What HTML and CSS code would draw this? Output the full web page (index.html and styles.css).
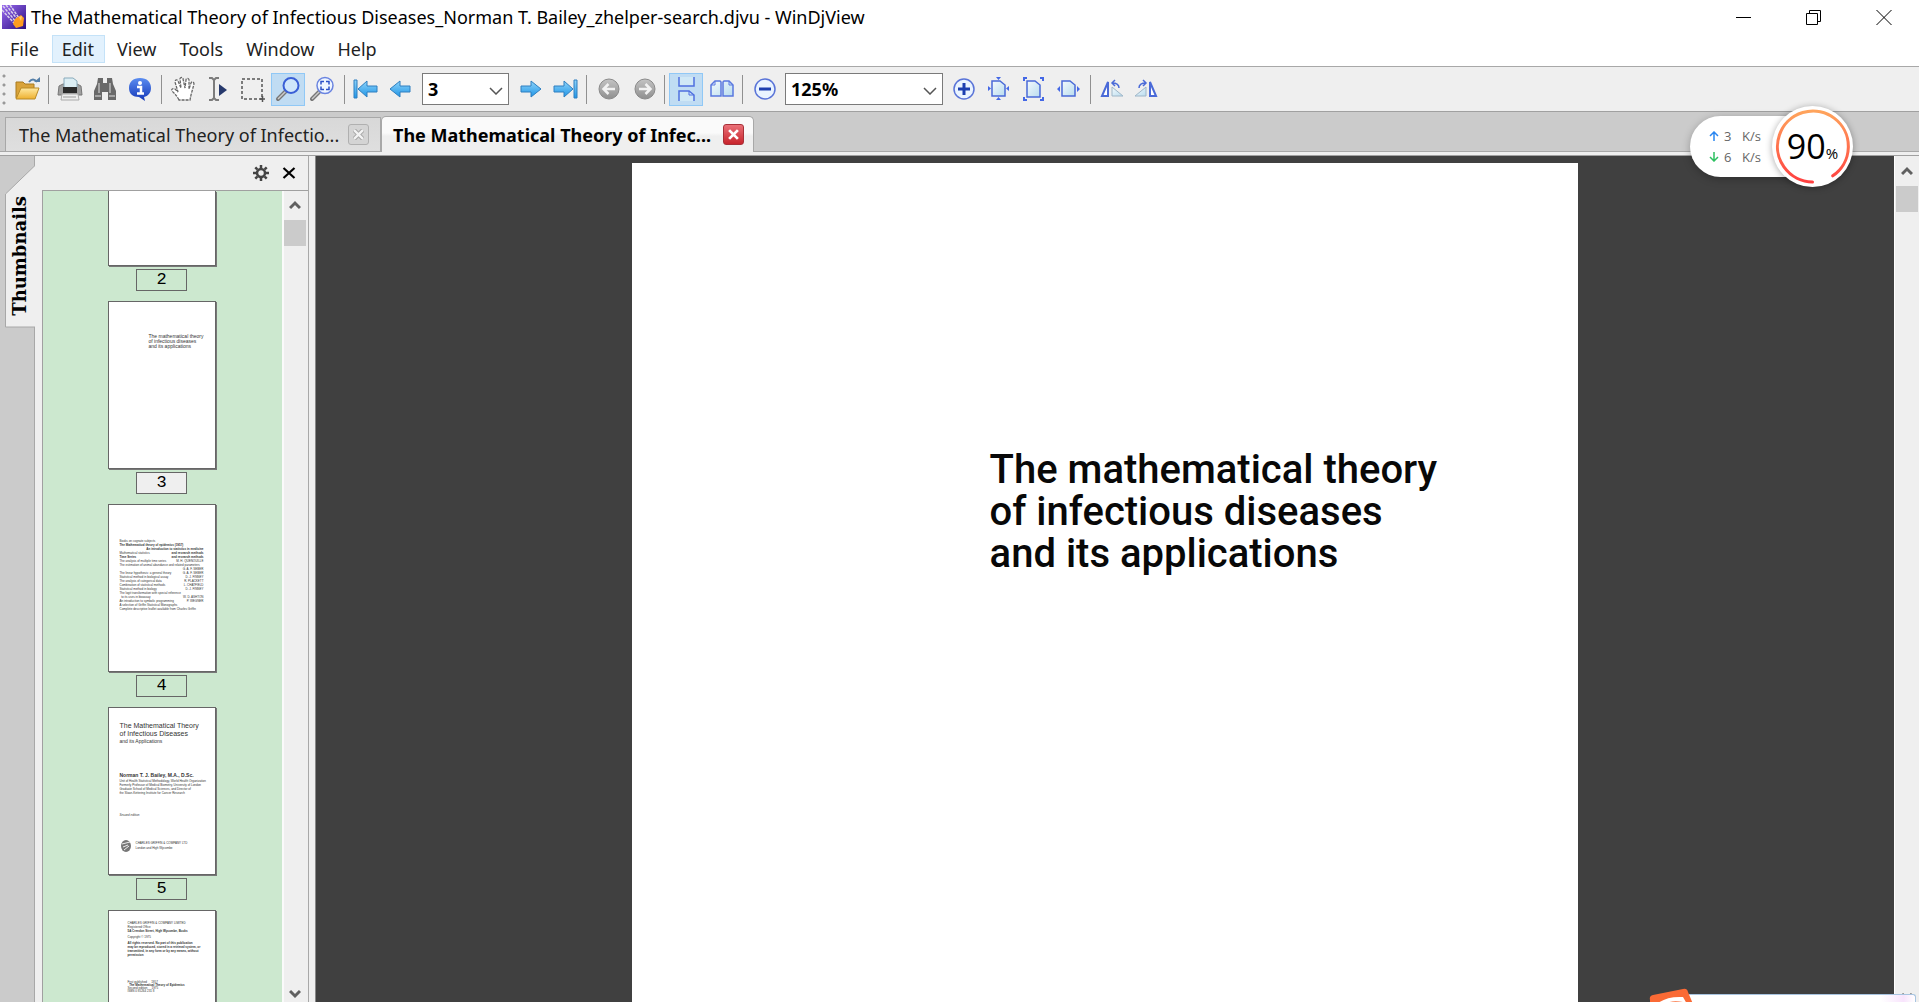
FILE: index.html
```html
<!DOCTYPE html>
<html lang="en">
<head>
<meta charset="utf-8">
<title>The Mathematical Theory of Infectious Diseases - WinDjView</title>
<link rel="stylesheet" href="styles.css">
</head>
<body>
<svg class="defs" width="0" height="0" aria-hidden="true">
  <defs>
    <linearGradient id="blue" x1="0" y1="0" x2="0" y2="1"><stop offset="0" stop-color="#8fd4fa"/><stop offset="1" stop-color="#1f95e6"/></linearGradient>
    <linearGradient id="gray" x1="0" y1="0" x2="0" y2="1"><stop offset="0" stop-color="#c4c4c4"/><stop offset="1" stop-color="#8f8f8f"/></linearGradient>
    <linearGradient id="paper" x1="0" y1="0" x2="1" y2="1"><stop offset="0" stop-color="#f4fafd"/><stop offset="1" stop-color="#b9dcee"/></linearGradient>
    <linearGradient id="folder" x1="0" y1="0" x2="0" y2="1"><stop offset="0" stop-color="#ffe9a0"/><stop offset="1" stop-color="#eeb02f"/></linearGradient>
    <linearGradient id="info" x1="0" y1="0" x2="0" y2="1"><stop offset="0" stop-color="#5a8cf0"/><stop offset="1" stop-color="#1437b8"/></linearGradient>
    <linearGradient id="ring" x1="0" y1="0" x2="0" y2="1"><stop offset="0" stop-color="#ffa45c"/><stop offset="1" stop-color="#ff4040"/></linearGradient>
    <linearGradient id="app" x1="0" y1="0" x2="1" y2="1"><stop offset="0" stop-color="#9a6af0"/><stop offset="1" stop-color="#2a0f80"/></linearGradient>
  </defs>
</svg>

<header class="titlebar">
  <svg class="app-icon" viewBox="0 0 24 24"><rect width="24" height="24" fill="url(#app)"/><path d="M1 1l13 16M4 0l12 15M8 0l9 13M0 5l12 13" stroke="#d8d0ea" stroke-width="1.500" stroke-dasharray="3 1"/><path d="M13 14l6-4 3 3-1 8-7 2-3-4z" fill="#ff9d20"/><path d="M17 12l3-1-1 5z" fill="#ffd070"/></svg>
  <h1 class="title">The Mathematical Theory of Infectious Diseases_Norman T. Bailey_zhelper-search.djvu - WinDjView</h1>
  <div class="window-controls">
    <button aria-label="Minimize"><svg viewBox="0 0 16 16"><path d="M0 8.500h15" stroke="#000"/></svg></button>
    <button aria-label="Restore"><svg viewBox="0 0 16 16"><path d="M.5 4.500h11v11H.5zM3.500 4.500v-3h11v11h-3" fill="none" stroke="#000"/></svg></button>
    <button aria-label="Close"><svg viewBox="0 0 16 16"><path d="M.5 1l15 15M15.500 1l-15 15" stroke="#000"/></svg></button>
  </div>
</header>

<nav class="menubar">
  <button>File</button><button class="hot">Edit</button><button>View</button><button>Tools</button><button>Window</button><button>Help</button>
</nav>

<div class="toolbar" role="toolbar">
  <span class="grip"></span>
  <div class="group">
    <button aria-label="Open"><svg viewBox="0 0 26 26"><path d="M2 22V6h7l2 2h9v4" fill="#d9a33a" stroke="#a87a20"/><path d="M2 23l5-11h18l-4 11z" fill="url(#folder)" stroke="#b98a26"/><path d="M15 6q4-5 8 0" fill="none" stroke="#557fa8" stroke-width="2"/><path d="M20 6h6V1z" fill="#557fa8"/></svg></button>
  </div>
  <span class="sep"></span>
  <div class="group">
    <button aria-label="Print"><svg viewBox="0 0 26 26"><path d="M2 10l4-2h14l4 2 1 9H1z" fill="#a0a0a0" stroke="#777"/><path d="M7 12V2h9l4 3v7z" fill="#dceef4" stroke="#8ab"/><path d="M6 11h14v6H6z" fill="#2c2c2c"/><path d="M5 18h16l1 6H4z" fill="#eee" stroke="#aaa"/><path d="M6 21h13" stroke="#9a9a9a"/></svg></button>
    <button aria-label="Find"><svg viewBox="0 0 26 26"><path d="M6 2h5v5h4V2h5l1 6 3 7v9h-8v-8h-6v8H2v-9l3-7z" fill="#696969"/><path d="M7 7v10M18 7v10M3 20h6M17 20h6" stroke="#a5a5a5" stroke-width="2"/></svg></button>
    <button aria-label="Information"><svg viewBox="0 0 26 26"><path d="M13 2c7 0 11 4 11 10 0 5-3 8-7 9l1 4-6-4C6 21 2 18 2 12 2 6 6 2 13 2z" fill="url(#info)"/><circle cx="13" cy="7" r="2" fill="#fff"/><path d="M10 11h4v6M10 17.500h7" fill="none" stroke="#fff" stroke-width="2.500"/></svg></button>
  </div>
  <span class="sep"></span>
  <div class="group">
    <button aria-label="Hand"><svg viewBox="0 0 26 26"><path d="M9 24c-2-4-4-6-7-9-1-2 1-3 3-2l3 3L5 6c0-2 2-3 3-1l3 7-1-9c0-2 3-2 3 0l2 9 1-8c0-2 3-2 3 0v9l2-6c1-2 3-1 3 1l-3 11-1 5z" fill="#fff" stroke="#666" stroke-width="1.300" stroke-dasharray="3 1"/></svg></button>
    <button aria-label="Select text"><svg viewBox="0 0 26 26"><path d="M4 2h3l2 2 2-2h3M9 4v18M4 24h3l2-2 2 2h3" fill="none" stroke="#7c7c7c" stroke-width="2"/><path d="M14 8l8 6-8 6z" fill="#26386c"/></svg></button>
    <button aria-label="Select rectangle"><svg viewBox="0 0 26 26"><path d="M2 3h20v20H2z" fill="none" stroke="#555" stroke-width="1.500" stroke-dasharray="3 2"/><path d="M20 23h5M22.500 20v6" stroke="#555" stroke-width="1.500"/></svg></button>
    <button class="on" aria-label="Zoom"><svg viewBox="0 0 26 26"><path d="M3 23l8-8" stroke="#777" stroke-width="4" stroke-linecap="round"/><path d="M3 23l8-8" stroke="#ccc" stroke-width="1.500"/><circle cx="16" cy="9.500" r="7.500" fill="#cfe6fb" stroke="#3a5fd6" stroke-width="2"/></svg></button>
    <button aria-label="Zoom to selection"><svg viewBox="0 0 26 26"><path d="M2 23l8-8" stroke="#777" stroke-width="4" stroke-linecap="round"/><path d="M2 23l8-8" stroke="#ccc" stroke-width="1.500"/><circle cx="15" cy="9.500" r="8" fill="#eef5ff" stroke="#6a84e0" stroke-width="1.500"/><path d="M11 8.500V5.500h3M16 5.500h3v3M19 10.500v3h-3M14 13.500h-3v-3" fill="none" stroke="#2b50c8" stroke-width="1.500"/></svg></button>
  </div>
  <span class="sep"></span>
  <div class="group">
    <button aria-label="First page"><svg viewBox="0 0 26 26"><path d="M1 4h3v18H1z" fill="url(#blue)" stroke="#2e7fc0"/><path d="M5 13l9-8v5h10v6H14v5z" fill="url(#blue)" stroke="#2e7fc0"/></svg></button>
    <button aria-label="Previous page"><svg viewBox="0 0 26 26"><path d="M2 13l10-8v5h10v6H12v5z" fill="url(#blue)" stroke="#2e7fc0"/></svg></button>
  </div>
  <div class="combo page-combo"><select aria-label="Page"><option>3</option></select><svg viewBox="0 0 14 8"><path d="M1 1l6 6 6-6" fill="none" stroke="#555" stroke-width="1.500"/></svg></div>
  <div class="group">
    <button aria-label="Next page"><svg viewBox="0 0 26 26"><path d="M24 13L14 5v5H4v6h10v5z" fill="url(#blue)" stroke="#2e7fc0"/></svg></button>
    <button aria-label="Last page"><svg viewBox="0 0 26 26"><path d="M22 4h3v18h-3z" fill="url(#blue)" stroke="#2e7fc0"/><path d="M21 13l-9-8v5H2v6h10v5z" fill="url(#blue)" stroke="#2e7fc0"/></svg></button>
  </div>
  <span class="sep"></span>
  <div class="group">
    <button aria-label="Back"><svg viewBox="0 0 26 26"><circle cx="14" cy="13" r="10" fill="url(#gray)" stroke="#8a8a8a"/><path d="M20 13H9M13.500 8l-5 5 5 5" fill="none" stroke="#f2f2f2" stroke-width="2.500"/></svg></button>
    <button aria-label="Forward"><svg viewBox="0 0 26 26"><circle cx="15" cy="13" r="10" fill="url(#gray)" stroke="#8a8a8a"/><path d="M9 13h11M15.500 8l5 5-5 5" fill="none" stroke="#f2f2f2" stroke-width="2.500"/></svg></button>
  </div>
  <span class="sep"></span>
  <div class="group">
    <button class="on" aria-label="Continuous"><svg viewBox="0 0 26 26"><path d="M6 1v9h15V1M6 25V15h10l5 4v6" fill="#d0e8f6"/><path d="M6 1v9h15V1M6 25V15h10l5 4v6" fill="none" stroke="#4f6fe0" stroke-width="1.500"/><path d="M16 15v4h5" fill="none" stroke="#4f6fe0"/></svg></button>
    <button aria-label="Facing pages"><svg viewBox="0 0 26 26"><path d="M3 20V9l4-4h5l1 1v14zM25 20V9l-4-4h-5l-1 1v14z" fill="url(#paper)" stroke="#5a78e0" stroke-width="1.500"/><path d="M7 5v4H3M21 5v4h4" fill="none" stroke="#5a78e0"/></svg></button>
  </div>
  <span class="sep"></span>
  <div class="group">
    <button aria-label="Zoom out"><svg viewBox="0 0 26 26"><circle cx="14" cy="13" r="10" fill="#eaf4ff" stroke="#5a74d8" stroke-width="1.500"/><path d="M8 13h12" stroke="#1c3fb0" stroke-width="3"/></svg></button>
  </div>
  <div class="combo zoom-combo"><select aria-label="Zoom level"><option>125%</option></select><svg viewBox="0 0 14 8"><path d="M1 1l6 6 6-6" fill="none" stroke="#555" stroke-width="1.500"/></svg></div>
  <div class="group">
    <button aria-label="Zoom in"><svg viewBox="0 0 26 26"><circle cx="13" cy="13" r="10" fill="#eaf4ff" stroke="#5a74d8" stroke-width="1.500"/><path d="M7 13h12M13 7v12" stroke="#1c3fb0" stroke-width="3"/></svg></button>
    <button aria-label="Fit page"><svg viewBox="0 0 26 26"><path d="M6 5h8l5 4v11H6z" fill="url(#paper)" stroke="#4a6ad8" stroke-width="1.500"/><path d="M10 1h5l-2.500 3zM10 24h5l-2.500-3zM2 10v5l3-2.500zM23 10v5l-3-2.500z" fill="#4468e6"/></svg></button>
    <button aria-label="Actual size"><svg viewBox="0 0 26 26"><path d="M6 5h8l5 4v12H6z" fill="url(#paper)" stroke="#4a6ad8" stroke-width="1.500"/><path d="M3 5V2h3M19 2h3v3M3 21v3h3M22 21v3h-3" fill="none" stroke="#4468e6" stroke-width="2"/></svg></button>
    <button aria-label="Fit width"><svg viewBox="0 0 26 26"><path d="M6 5h8l5 4v11H6z" fill="url(#paper)" stroke="#4a6ad8" stroke-width="1.500"/><path d="M4 10v6l-3-3zM21 10v6l3-3z" fill="#4468e6"/></svg></button>
  </div>
  <span class="sep"></span>
  <div class="group">
    <button aria-label="Rotate left"><svg viewBox="0 0 26 26"><path d="M3 20l6-14v14z" fill="#fff" stroke="#4a6ad8" stroke-width="2"/><path d="M13 20V11l11 9z" fill="url(#paper)" stroke="#9eb6c8"/><path d="M20 12c0-3-2-5-7-5M16 4l-3 3 3 3" fill="none" stroke="#4a6ad8" stroke-width="1.500"/></svg></button>
    <button aria-label="Rotate right"><svg viewBox="0 0 26 26"><path d="M22 20L16 6v14z" fill="#fff" stroke="#4a6ad8" stroke-width="2"/><path d="M12 20V11L1 20z" fill="url(#paper)" stroke="#9eb6c8"/><path d="M5 12c0-3 2-5 7-5M9 4l3 3-3 3" fill="none" stroke="#4a6ad8" stroke-width="1.500"/></svg></button>
  </div>
</div>

<div class="tabs">
  <div class="tab"><span class="tab-name">The Mathematical Theory of Infectio...</span><button aria-label="Close tab"><svg viewBox="0 0 10 10"><path d="M1 1l8 8M9 1L1 9" stroke="#a8a8a8" stroke-width="4"/><path d="M1 1l8 8M9 1L1 9" stroke="#f4f4f4" stroke-width="2"/></svg></button></div>
  <div class="tab active"><span class="tab-name">The Mathematical Theory of Infec...</span><button aria-label="Close tab"><svg viewBox="0 0 10 10"><path d="M1 1l8 8M9 1L1 9" stroke="#fff" stroke-width="2.500"/></svg></button></div>
</div>

<main class="work">
  <div class="side-strip">
    <button class="side-tab"><svg viewBox="0 0 30 163"><path d="M30 .5L.5 29v133H30" fill="#efefef" stroke="#a8a8a8"/></svg><span>Thumbnails</span></button>
  </div>
  <aside class="panel">
    <div class="panel-head">
      <button aria-label="Settings"><svg viewBox="0 0 16 16"><circle cx="8" cy="8" r="4" fill="none" stroke="#444" stroke-width="2.500"/><path d="M8 0v3M8 13v3M0 8h3M13 8h3M2.300 2.300l2 2M11.700 11.700l2 2M13.700 2.300l-2 2M2.300 13.700l2-2" stroke="#444" stroke-width="2.500"/></svg></button>
      <button aria-label="Close panel"><svg viewBox="0 0 16 16"><path d="M2.500 3l11 10M13.500 3l-11 10" stroke="#000" stroke-width="2.200"/></svg></button>
    </div>
    <div class="panel-body">
      <div class="thumbs">
        <figure><div class="thumb cut"></div><figcaption>2</figcaption></figure>
        <figure><div class="thumb half">The mathematical theory<br>of infectious diseases<br>and its applications</div><figcaption class="current">3</figcaption></figure>
        <figure><div class="thumb list">
          <p>Books on cognate subjects</p>
          <p><b>The Mathematical theory of epidemics (1957)</b></p>
          <p class="row"><span></span><b>An introduction to statistics in medicine</b></p>
          <p class="row"><span>Mathematical statistics</span><b>and research methods</b></p>
          <p class="row"><b>Time Series</b><b>and research methods</b></p>
          <p class="row"><span>The analysis of multiple time series</span><span>M. H. QUENOUILLE</span></p>
          <p>The estimation of animal abundance and related parameters</p>
          <p class="row"><span></span><span>G. A. F. SEBER</span></p>
          <p class="row"><span>The linear hypothesis: a general theory</span><span>G. A. F. SEBER</span></p>
          <p class="row"><span>Statistical method in biological assay</span><span>D. J. FINNEY</span></p>
          <p class="row"><span>The analysis of categorical data</span><span>R. PLACKETT</span></p>
          <p class="row"><span>Combination of statistical methods</span><span>L. CHATFIELD</span></p>
          <p class="row"><span>Statistical method in biology</span><span>D. J. FINNEY</span></p>
          <p>The logit transformation with special reference</p>
          <p class="row"><span>&nbsp; to its uses in bioassay</span><span>W. D. ASHTON</span></p>
          <p class="row"><span>An introduction to symbolic programming</span><span>P. WEGNER</span></p>
          <p>A selection of Griffin Statistical Monographs</p>
          <p>Complete descriptive leaflet available from Charles Griffin</p>
        </div><figcaption>4</figcaption></figure>
        <figure><div class="thumb cover">
          <p class="big">The Mathematical Theory<br>of Infectious Diseases</p><p class="mid">and its Applications</p>
          <p class="mid author"><b>Norman T. J. Bailey, M.A., D.Sc.</b></p>
          <p>Unit of Health Statistical Methodology, World Health Organization<br>Formerly Professor of Medical Biometry, University of London<br>Graduate School of Medical Sciences, and Director of<br>the Sloan-Kettering Institute for Cancer Research</p>
          <p class="edition">Second edition</p>
          <div class="press"><svg viewBox="0 0 12 14"><ellipse cx="6" cy="7" rx="5" ry="6" fill="#777"/><path d="M2 5l8-2M3 8l5-2M4 11l5-4" stroke="#eee"/></svg><p>CHARLES GRIFFIN &amp; COMPANY LTD<br>London and High Wycombe</p></div>
        </div><figcaption>5</figcaption></figure>
        <figure><div class="thumb imprint">
          <p>CHARLES GRIFFIN &amp; COMPANY LIMITED<br>Registered Office<br><b>5A Crendon Street, High Wycombe, Bucks</b></p>
          <p class="space">Copyright © 1975</p>
          <p class="space"><b>All rights reserved. No part of this publication<br>may be reproduced, stored in a retrieval system, or<br>transmitted, in any form or by any means, without<br>permission</b></p>
          <p class="later">First published &nbsp; &nbsp; 1957<br><b>&nbsp; The Mathematical Theory of Epidemics</b><br>Second edition &nbsp; &nbsp; 1975<br>ISBN 0 85264 231 8</p>
        </div></figure>
      </div>
      <div class="scroll">
        <svg viewBox="0 0 12 10"><path d="M1 8l5-5 5 5" fill="none" stroke="#606060" stroke-width="3"/></svg>
        <span class="knob"></span>
        <svg class="down" viewBox="0 0 12 10"><path d="M1 2l5 5 5-5" fill="none" stroke="#606060" stroke-width="3"/></svg>
      </div>
    </div>
  </aside>
  <section class="viewer">
    <article class="page"><h2>The mathematical theory<br>of infectious diseases<br>and its applications</h2></article>
  </section>
  <div class="scroll outer">
    <svg viewBox="0 0 12 10"><path d="M1 8l5-5 5 5" fill="none" stroke="#606060" stroke-width="3"/></svg>
    <span class="knob"></span>
    <svg class="down" viewBox="0 0 12 10"><path d="M1 2l5 5 5-5" fill="none" stroke="#606060" stroke-width="3"/></svg>
  </div>
</main>

<div class="meter">
  <div class="rates">
    <svg viewBox="0 0 10 10"><path d="M5 10V1M1 5l4-4 4 4" fill="none" stroke="#2a86f0" stroke-width="1.500"/></svg><span>3</span><span>K/s</span>
    <svg viewBox="0 0 10 10"><path d="M5 0v9M1 5l4 4 4-4" fill="none" stroke="#2cc060" stroke-width="1.500"/></svg><span>6</span><span>K/s</span>
  </div>
  <div class="dial">
    <svg viewBox="0 0 80 80"><path d="M60 69A35 35 0 1 0 40 75" fill="none" stroke="url(#ring)" stroke-width="3" stroke-linecap="round"/></svg>
    <span class="value">90</span><span class="unit">%</span>
  </div>
</div>
<div class="ime"><svg viewBox="0 0 46 16"><path d="M1 12q-1-4 3-5L34 1q4-1 5 3l5 12H1z" fill="#fa6a35"/><path d="M8 16q9-8 26-7l4 7-4-2q-12-2-18 2z" fill="#fff"/></svg></div>
</body>
</html>
```
FILE: styles.css
```css
* { box-sizing: border-box; }
html, body { height: 100%; }
body {
  margin: 0;
  display: flex;
  flex-direction: column;
  overflow: hidden;
  position: relative;
  background: #efefef;
  color: #000;
  font-family: "Noto Sans", "Open Sans", sans-serif;
}
p, h1, h2, figure { margin: 0; }
button { border: 0; padding: 0; background: none; color: inherit; font: inherit; }
svg { display: block; }
.defs { position: absolute; }

.titlebar { display: flex; align-items: center; height: 34px; padding-left: 2px; background: #fff; flex: none; }
.app-icon { width: 24px; height: 24px; margin-right: 5px; }
.title { flex: 1; font: 400 18px/34px "Noto Sans", sans-serif; white-space: nowrap; }
.window-controls { display: flex; }
.window-controls button { display: grid; place-items: center; width: 70px; height: 34px; }
.window-controls svg { width: 16px; height: 16px; }

.menubar { display: flex; gap: 2px; height: 32px; padding: 1px 0 3px; background: #fff; flex: none; font-size: 18px; }
.menubar button { border: 1px solid transparent; padding: 0 9px; line-height: 26px; color: #222; }
.menubar button { padding-right: 10px; }
.menubar .hot { background: #e2f1fd; border-color: #c4e2f8; }

.toolbar {
  display: flex;
  align-items: center;
  height: 46px;
  flex: none;
  background: #efefef;
  border-top: 1px solid #a8a8a8;
  border-bottom: 1px solid #a0a0a0;
}
.grip { width: 10px; height: 34px; background: radial-gradient(circle at 4px 4px, #999 1px, transparent 2px) 0 0 / 10px 9px; }
.group { display: flex; gap: 1px; }
.group button { display: grid; place-items: center; width: 34px; height: 33px; }
.group svg { width: 26px; height: 26px; }
.group .on { background: #c0dcf3; border: 1px solid #90c8f6; }
.sep { width: 9px; height: 29px; background: linear-gradient(#909090, #909090) center / 1px 100% no-repeat; }
.combo { position: relative; height: 32px; margin: 0 4px; }
.combo select {
  appearance: none;
  width: 100%;
  height: 32px;
  border: 1px solid #7a7a7a;
  border-radius: 0;
  padding: 0 5px;
  background: #fff;
  color: #000;
  font: 700 18px/28px "Noto Sans", sans-serif;
}
.combo svg { position: absolute; right: 6px; top: 14px; width: 14px; height: 8px; pointer-events: none; }
.page-combo { width: 87px; }
.zoom-combo { width: 158px; }

.tabs { display: flex; align-items: flex-end; height: 40px; flex: none; padding-left: 5px; background: #cbcbcb; border-bottom: 1px solid #a8a8a8; }
.tab {
  display: flex;
  align-items: center;
  width: 376px;
  height: 34px;
  padding: 0 11px 0 13px;
  border: 1px solid #a8a8a8;
  border-bottom: 0;
  background: linear-gradient(#d8d8d8, #dfdfdf);
  font-size: 18px;
  color: #222;
}
.tab-name { flex: 1; white-space: nowrap; }
.tab button { display: grid; place-items: center; width: 21px; height: 21px; border: 1px solid #b0b0b0; border-radius: 3px; background: #d4d4d4; }
.tab svg { width: 11px; height: 11px; }
.tab.active { width: 373px; height: 36px; margin-bottom: -1px; padding: 0 9px 0 11px; border-radius: 5px 5px 0 0; background: linear-gradient(#fafafa 45%, #efefef 55%); color: #000; font-weight: 700; }
.tab.active button { border-color: #a83038; background: linear-gradient(#ea7078, #c8242c); }

.work { display: flex; flex: 1; min-height: 0; margin-top: 3px; border-top: 1px solid #a0a0a0; }
.side-strip { width: 34px; padding: 9px 0 0 5px; background: #cbcbcb; flex: none; }
.side-tab { position: relative; display: grid; place-items: center; width: 30px; height: 163px; padding: 18px 0 0; }
.side-tab svg { position: absolute; inset: 0; width: 30px; height: 163px; }
.side-tab span { position: relative; writing-mode: vertical-rl; transform: rotate(180deg); font: 700 18px/20px "DejaVu Serif", serif; }
.panel { display: flex; flex-direction: column; width: 275px; flex: none; padding-left: 7px; border: solid #a8a8a8; border-width: 0 1px; }
.panel-head { display: flex; justify-content: flex-end; align-items: center; gap: 12px; height: 34px; flex: none; padding-right: 11px; }
.panel-head svg { width: 16px; height: 16px; }
.panel-body { display: flex; flex: 1; min-height: 0; border: solid #a0a0a0; border-width: 1px 0 0 1px; }
.thumbs { flex: 1; overflow: hidden; background: #cce8cf; padding-right: 66px; padding-left: 64px; }
.thumbs figure { display: flex; flex-direction: column; align-items: center; gap: 3px; margin-bottom: 10px; }
.thumb { width: 108px; height: 168px; overflow: hidden; background: #fff; border: 1px solid #666; box-shadow: 1px 1px 0 #777; color: #333; font: 3px/4px "Liberation Sans", sans-serif; flex: none; white-space: nowrap; }
.thumb.cut { height: 75px; border-top: 0; }
.thumb.half { padding: 32px 0 0 40px; font-size: 5px; line-height: 5px; }
.thumb.list { padding: 34px 11px 0; }
.row { display: flex; justify-content: space-between; }
.thumb.cover { padding: 14px 11px 0; }
.big { font-size: 7px; line-height: 8px; }
.mid { font-size: 5px; line-height: 6px; }
.author { margin: 28px 0 1px; }
.edition { margin-top: 18px; font-style: italic; }
.press { display: flex; align-items: center; gap: 4px; margin-top: 22px; line-height: 5px; }
.press svg { width: 12px; height: 14px; }
.thumb.imprint { padding: 10px 19px 0; }
.space { margin-top: 2px; }
.later { margin-top: 24px; line-height: 3px; }
figcaption { width: 51px; height: 22px; border: 1px solid #666; text-align: center; font: 17px/20px "Liberation Mono", monospace; }
.current { background: #efefef; }

.scroll { display: flex; flex-direction: column; align-items: center; gap: 10px; width: 26px; flex: none; padding: 9px 2px 3px 0; border-left: 2px solid #fafafa; background: #efefef; }
.scroll svg { width: 12px; height: 10px; flex: none; }
.knob { width: 22px; height: 26px; background: #cbcbcb; }
.scroll .down { margin-top: auto; }
.outer { width: 25px; padding: 10px 0 0; border-left: 1px solid #fff; }
.viewer { flex: 1; display: flex; justify-content: center; margin-left: 6px; padding-top: 7px; border-left: 1px solid #888; background: #404040; }
.page { width: 60%; padding: 286px 0 0 358px; background: #fff; }
.page h2 { font: 500 40px/42px Roboto, sans-serif; white-space: nowrap; color: #080808; }

.meter { position: absolute; top: 106px; right: 66px; display: flex; align-items: center; width: 163px; height: 81px; }
.rates { display: grid; grid-template-columns: 10px 8px auto; justify-content: start; align-content: center; align-items: center; column-gap: 5px; width: 120px; height: 61px; padding-left: 19px; border-radius: 31px 0 0 31px; background: #fff; box-shadow: 0 2px 8px #0004; color: #666; font: 13px/21px "Open Sans", sans-serif; }
.rates svg { width: 10px; height: 10px; }
.rates span:nth-of-type(even) { padding-left: 5px; }
.dial { position: absolute; right: 0; top: 0; display: flex; align-items: baseline; justify-content: center; width: 81px; height: 81px; border-radius: 50%; background: #fff; box-shadow: 0 1px 7px #0005; }
.dial svg { position: absolute; inset: 0; width: 81px; height: 81px; }
.value { font: 34px/80px "Open Sans", sans-serif; }
.unit { font: 15px/20px "Open Sans", sans-serif; }
.ime { position: absolute; right: 3px; bottom: 0; width: 231px; height: 8px; border: 1px solid #a8c4e0; border-bottom: 0; border-radius: 0 3px 0 0; background: linear-gradient(90deg, #fff 85%, #f8e4fc 95%, #fff); }
.ime svg { position: absolute; left: -37px; bottom: -2px; width: 46px; height: 16px; }
```
